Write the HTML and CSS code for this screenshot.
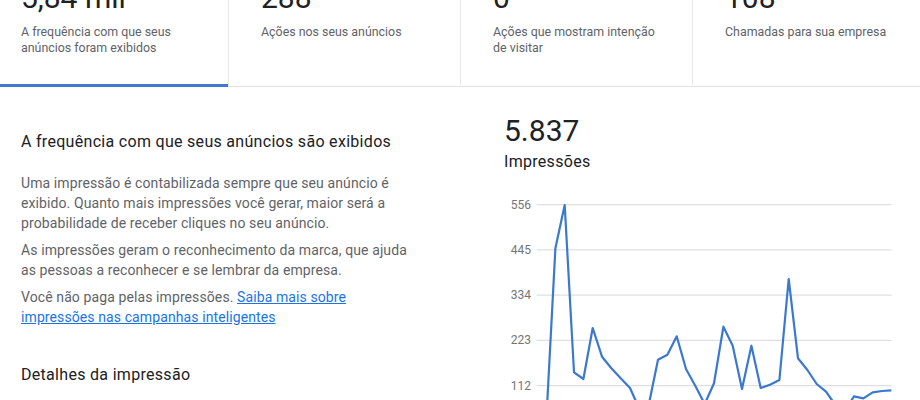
FILE: index.html
```html
<!DOCTYPE html>
<html lang="pt-BR">
<head>
<meta charset="utf-8">
<title>Impressões</title>
<link rel="stylesheet" href="styles.css">
</head>
<body>
<div class="page">
  <div class="stats">
    <div class="stat active">
      <div class="stat-value">5,84 mil</div>
      <div class="stat-label">A frequência com que seus anúncios foram exibidos</div>
    </div>
    <div class="stat">
      <div class="stat-value">288</div>
      <div class="stat-label">Ações nos seus anúncios</div>
    </div>
    <div class="stat">
      <div class="stat-value">0</div>
      <div class="stat-label">Ações que mostram intenção de visitar</div>
    </div>
    <div class="stat">
      <div class="stat-value">108</div>
      <div class="stat-label">Chamadas para sua empresa</div>
    </div>
  </div>
  <div class="main">
    <div class="info">
      <h2 class="info-title">A frequência com que seus anúncios são exibidos</h2>
      <p class="info-text">Uma impressão é contabilizada sempre que seu anúncio é exibido. Quanto mais impressões você gerar, maior será a probabilidade de receber cliques no seu anúncio.</p>
      <p class="info-text">As impressões geram o reconhecimento da marca, que ajuda as pessoas a reconhecer e se lembrar da empresa.</p>
      <p class="info-text">Você não paga pelas impressões. <a class="link" href="#">Saiba mais sobre impressões nas campanhas inteligentes</a></p>
      <h2 class="info-title details">Detalhes da impressão</h2>
    </div>
    <div class="chart-col">
      <div class="total">5.837</div>
      <div class="total-label">Impressões</div>
      <svg class="chart" width="416" height="250" viewBox="0 0 416 250">
        <g class="grid">
          <line x1="32.7" y1="15.7" x2="387.7" y2="15.7"/>
          <line x1="32.7" y1="60.95" x2="387.7" y2="60.95"/>
          <line x1="32.7" y1="106.2" x2="387.7" y2="106.2"/>
          <line x1="32.7" y1="151.45" x2="387.7" y2="151.45"/>
          <line x1="32.7" y1="196.7" x2="387.7" y2="196.7"/>
        </g>
        <g class="axis">
          <text x="27" y="15.7">556</text>
          <text x="27" y="60.95">445</text>
          <text x="27" y="106.2">334</text>
          <text x="27" y="151.45">223</text>
          <text x="27" y="196.7">112</text>
        </g>
        <polyline class="series" points="32.7,228 42.0,237 51.4,59.3 60.7,16 70.0,183.3 79.4,190 88.7,139 98.0,167.7 107.4,179.3 116.7,189.3 126.0,199 135.4,220 144.7,216 154.0,170.7 163.4,165.7 172.7,147.3 182.0,180 191.4,197 200.7,215 210.0,194.3 219.4,137.7 228.7,156.7 238.0,200 247.4,156.7 256.7,199 266.0,195.7 275.4,191 284.7,90 294.0,169.3 303.4,181 312.7,195 322.0,202.7 331.4,216 340.7,222 350.0,207.3 359.4,209.3 368.7,203.3 378.0,202 387.4,201.3"/>
      </svg>
    </div>
  </div>
</div>
</body>
</html>
```
FILE: styles.css
```css
html, body {
  margin: 0;
  padding: 0;
  background: #ffffff;
}
body {
  font-family: Roboto, "Liberation Sans", Arial, sans-serif;
  color: #3c4043;
  overflow: hidden;
}
.page {
  margin-top: -20px;
}
.stats {
  display: grid;
  grid-template-columns: 228px 232px 232px 1fr;
  border-bottom: 1px solid #e3e3e3;
}
.stat {
  padding: 0 32px 28px 32px;
  border-left: 1px solid #e8e8e8;
  border-bottom: 3px solid transparent;
  margin-bottom: -1px;
}
.stat.active {
  padding-left: 21px;
  border-left: none;
  border-bottom-color: #3d7bd0;
}
.stat-value {
  font-size: 30px;
  line-height: 36px;
  color: #202124;
}
.stat-label {
  margin-top: 8px;
  font-size: 12.4px;
  line-height: 16px;
  color: #5f6368;
}
.main {
  display: flex;
  padding-left: 21px;
  gap: 53px;
}
.info {
  width: 430px;
  padding-top: 43px;
}
.info-title {
  margin: 0 0 19px;
  font-size: 16px;
  line-height: 24px;
  font-weight: 400;
  color: #202124;
  letter-spacing: 0.3px;
}
.info-title.details {
  margin-top: 36px;
}
.info-text {
  margin: 0 0 7px;
  font-size: 14px;
  line-height: 20px;
  color: #5f6368;
  letter-spacing: 0.1px;
  width: 400px;
}
.link {
  color: #1a73e8;
  text-decoration: underline;
}
.chart-col {
  flex: 1;
  padding-top: 28px;
}
.total {
  font-size: 30px;
  line-height: 32px;
  color: #202124;
}
.total-label {
  margin-top: 3px;
  font-size: 16px;
  line-height: 24px;
  font-weight: 400;
  color: #202124;
  letter-spacing: 0.3px;
}
.chart {
  display: block;
  margin-top: 15px;
  overflow: visible;
}
.grid line {
  stroke: #e0e0e0;
  stroke-width: 1.2;
}
.axis text {
  font-family: Roboto, "Liberation Sans", Arial, sans-serif;
  font-size: 12px;
  fill: #757575;
  text-anchor: end;
  dominant-baseline: central;
}
.series {
  fill: none;
  stroke: #3b78d0;
  stroke-width: 2.2;
  stroke-linejoin: round;
}
```
